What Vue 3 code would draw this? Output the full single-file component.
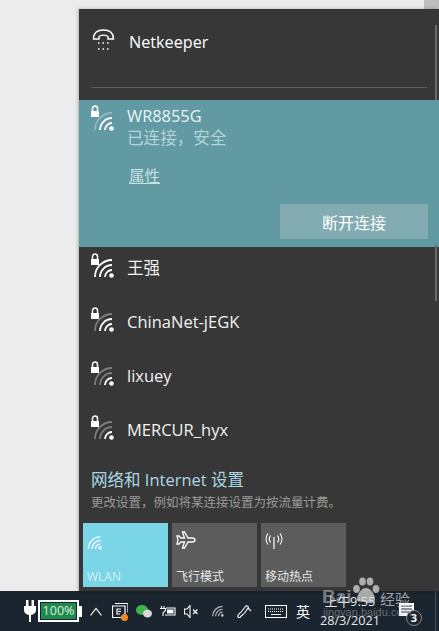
<script setup>
const networks = [
  { name: '王强', bars: 3 },
  { name: 'ChinaNet-jEGK', bars: 2 },
  { name: 'lixuey', bars: 1 },
  { name: 'MERCUR_hyx', bars: 1 }
]
</script>

<template>
  <div class="page">
    <div class="desk">
      <div class="corner"></div>
      <div class="flyout">
        <div class="dial">
          <svg class="dial-icon" width="24" height="22" viewBox="0 0 24 22" fill="none" stroke="#fff">
            <path d="M1.500 10C1.500 3.500 6 1 11.500 1s10 2.500 10 9h-5.500V7.500c-2.500-1.500-6.500-1.500-9 0V10z" stroke-width="1.400" />
            <path d="M6 14h1.500M10.500 14H12M15 14h1.500M6 20h1.500M10.500 20H12M15 20h1.500" stroke-width="1.500" />
          </svg>
          <span class="dial-name">Netkeeper</span>
        </div>
        <div class="divider"></div>

        <div class="active">
          <div class="active-top">
            <div class="wifi">
              <svg class="lock" width="10" height="13" viewBox="0 0 10 13">
                <path d="M2.500 6V3.500a2.500 2.500 0 0 1 5 0V6" fill="none" stroke="#fff" stroke-width="1.500" />
                <rect x="1" y="6" width="8" height="6" fill="#fff" />
              </svg>
              <svg class="bars" width="24" height="24" viewBox="0 0 24 24" fill="none" stroke="#fff" stroke-width="1.800">
                <path d="M12 21a7 7 0 0 1 7-7" />
                <path d="M7 21a12 12 0 0 1 12-12" />
                <path d="M2 21A17 17 0 0 1 19 4" opacity=".3" />
                <circle cx="18.500" cy="19.500" r="2.300" fill="#fff" stroke="none" />
              </svg>
            </div>
            <div class="active-text">
              <div class="active-name">WR8855G</div>
              <div class="active-state">已连接，安全</div>
            </div>
          </div>
          <a class="prop">属性</a>
          <div class="active-foot">
            <button class="disconnect">断开连接</button>
          </div>
        </div>

        <div v-for="net in networks" :key="net.name" class="net">
          <div class="wifi">
            <svg class="lock" width="10" height="13" viewBox="0 0 10 13">
              <path d="M2.500 6V3.500a2.500 2.500 0 0 1 5 0V6" fill="none" stroke="#fff" stroke-width="1.500" />
              <rect x="1" y="6" width="8" height="6" fill="#fff" />
            </svg>
            <svg class="bars" width="24" height="24" viewBox="0 0 24 24" fill="none" stroke="#fff" stroke-width="1.800">
              <path d="M12 21a7 7 0 0 1 7-7" :opacity="net.bars >= 1 ? 1 : .3" />
              <path d="M7 21a12 12 0 0 1 12-12" :opacity="net.bars >= 2 ? 1 : .35" />
              <path d="M2 21A17 17 0 0 1 19 4" :opacity="net.bars >= 3 ? 1 : .35" />
              <circle cx="18.500" cy="19.500" r="2.300" fill="#fff" stroke="none" />
            </svg>
          </div>
          <span class="net-name">{{ net.name }}</span>
        </div>

        <div class="settings">
          <div class="settings-title">网络和 Internet 设置</div>
          <div class="settings-sub">更改设置，例如将某连接设置为按流量计费。</div>
        </div>

        <div class="tiles">
          <div class="tile tile-on">
            <svg class="wlan-icon" width="17" height="17" viewBox="0 0 24 24" fill="none" stroke="#dff4f8" stroke-width="2.200">
              <path d="M12 21a7 7 0 0 1 7-7" />
              <path d="M7 21a12 12 0 0 1 12-12" />
              <path d="M2 21A17 17 0 0 1 19 4" />
              <circle cx="18.500" cy="19.500" r="2.600" fill="#dff4f8" stroke="none" />
            </svg>
            <span class="tile-label">WLAN</span>
          </div>
          <div class="tile">
            <svg width="20" height="20" viewBox="0 0 20 20" fill="none" stroke="#fff" stroke-width="1.300">
              <path d="M19 10c0-1.500-1.500-2-3-2h-4L8.500 2h-2l2 6H5L3 6H1l1 4-1 4h2l2-2h3.500l-2 6h2l3.500-6h4c1.500 0 3-.5 3-2z" />
            </svg>
            <span class="tile-label">飞行模式</span>
          </div>
          <div class="tile">
            <svg class="spot-icon" width="18" height="18" viewBox="0 0 18 18" fill="none" stroke="#fff" stroke-width="1.200">
              <path d="M9 5v12M5.500 3.500a6 6 0 0 0 0 7M12.500 3.500a6 6 0 0 1 0 7M3 1.500a9 9 0 0 0 0 11M15 1.500a9 9 0 0 1 0 11" />
            </svg>
            <span class="tile-label">移动热点</span>
          </div>
        </div>

        <div class="thumb thumb-top"></div>
        <div class="thumb thumb-low"></div>
      </div>
    </div>

    <div class="taskbar">
      <svg class="plug" width="12" height="22" viewBox="0 0 12 22" fill="#fff">
        <rect x="2" y="0" width="2.500" height="6" />
        <rect x="7.500" y="0" width="2.500" height="6" />
        <path d="M0 6h12v4a5 5 0 0 1-5 5v7H5v-7a5 5 0 0 1-5-5z" />
      </svg>
      <div class="battery">
        <div class="battery-fill">100%</div>
      </div>
      <div class="battery-tip"></div>
      <svg class="chev" width="12" height="9" viewBox="0 0 12 9" fill="none" stroke="#fff" stroke-width="1.200">
        <path d="M.5 8.500L6 1.500l5.500 7" />
      </svg>
      <div class="screen">
        <svg width="16" height="16" viewBox="0 0 16 16" fill="none" stroke="#fff" stroke-width="1.200">
          <path d="M.5 3h12.500v11.500H.5zM3 .5h13v9" />
          <path d="M9 6H5v5h3M6 8.500h3" />
        </svg>
        <span class="dot"></span>
      </div>
      <svg class="wechat" width="16" height="13" viewBox="0 0 16 13">
        <ellipse cx="6" cy="5" rx="6" ry="5" fill="#3cb54a" />
        <ellipse cx="11.500" cy="8.500" rx="4.500" ry="4" fill="#d8d8d8" />
      </svg>
      <svg class="power" width="16" height="11" viewBox="0 0 16 11" fill="none" stroke="#fff" stroke-width="1.100">
        <path d="M1.500 0v2.500M4 0v2.500M0 2.500h5.500v2L3 7v3" />
        <path d="M6 2h9v7H5" />
        <rect x="7" y="3.500" width="6.500" height="4" fill="#fff" stroke="none" />
      </svg>
      <svg class="speaker" width="14" height="13" viewBox="0 0 14 13" fill="none" stroke="#fff" stroke-width="1.100">
        <path d="M.5 4h2.500l3-3.500v12L3 9H.5zM9 4.500l4.500 4.500M13.500 4.500L9 9" />
      </svg>
      <svg class="tray-wifi" width="15" height="14" viewBox="0 0 24 24" fill="none" stroke="#bbb" stroke-width="2">
        <path d="M12 21a7 7 0 0 1 7-7" />
        <path d="M7 21a12 12 0 0 1 12-12" />
        <path d="M2 21A17 17 0 0 1 19 4" />
        <circle cx="18.500" cy="19.500" r="2.300" fill="#bbb" stroke="none" />
      </svg>
      <svg class="pen" width="16" height="13" viewBox="0 0 16 13" fill="none" stroke="#fff" stroke-width="1.100">
        <path d="M2 12C.5 10 4 8.500 6 6l3.500-4.500c1.500-1.500 3.500 0 2.500 1.500L9 7.500c-2 2.500-4 3-5 5-.5.500-1.500.500-2-.5z" />
        <path d="M12 3l3 3" />
      </svg>
      <svg class="keyboard" width="22" height="13" viewBox="0 0 22 13" fill="none" stroke="#fff" stroke-width="1">
        <rect x=".5" y=".5" width="21" height="12" />
        <path d="M3 4h16M3 6.500h16" stroke-dasharray="1 1" />
        <path d="M6 9.500h10" />
      </svg>
      <span class="ime">英</span>
      <div class="clock">
        <span>上午9:55</span>
        <span>28/3/2021</span>
      </div>
      <div class="notice">
        <svg width="15" height="13" viewBox="0 0 15 13">
          <path d="M0 0h15v13H0z" fill="#fff" />
          <path d="M2 3h11M2 6h11M2 9h8" stroke="#1b2530" />
        </svg>
        <span class="badge">3</span>
      </div>
      <div class="desktop-edge"></div>
    </div>

    <svg class="paw" width="28" height="28" viewBox="0 0 28 28" fill="#d8d8d8">
      <ellipse cx="4.500" cy="12" rx="3.300" ry="4" />
      <ellipse cx="10.500" cy="4.500" rx="3.300" ry="4" />
      <ellipse cx="18" cy="4.500" rx="3.300" ry="4" />
      <ellipse cx="24" cy="12" rx="3.300" ry="4" />
      <path d="M14 11c5 0 9 7 9 11s-4 5-9 3.500S5 26 5 22s4-11 9-11z" />
    </svg>
    <span class="wm-bai">Bai</span>
    <span class="wm-jy">经验</span>
    <span class="wm-url">jingyan.baidu.com</span>
  </div>
</template>

<style scoped>
.page {
  position: relative;
  width: 439px;
  height: 631px;
  display: flex;
  flex-direction: column;
  overflow: hidden;
  font-family: "Open Sans", "Noto Sans CJK SC", sans-serif;
  background: #ececec;
}
.desk {
  position: relative;
  flex: 1;
  min-height: 0;
  padding: 9px 0 0 79px;
  box-sizing: border-box;
}
.corner {
  position: absolute;
  right: 0;
  top: 0;
  width: 15px;
  height: 9px;
  background: #bdbdbd;
}
.flyout {
  position: relative;
  height: 582px;
  background: #373737;
  box-shadow: -1px 0 3px rgba(0, 0, 0, 0.25);
  display: flex;
  flex-direction: column;
  overflow: hidden;
}
.dial {
  height: 68px;
  display: flex;
  align-items: center;
  padding-left: 13px;
  gap: 13px;
  box-sizing: border-box;
  padding-bottom: 2px;
}
.dial-icon {
  margin-bottom: 4px;
}
.dial-name {
  color: #fff;
  font-size: 16.200px;
}
.divider {
  height: 1px;
  background: #5e5e5e;
  margin: 10px 12px 12px;
}
.active {
  height: 147px;
  background: #629aa3;
  flex: none;
  position: relative;
}
.active-top {
  display: flex;
  padding-top: 5px;
  gap: 8px;
}
.wifi {
  position: relative;
  width: 40px;
  height: 32px;
  flex: none;
}
.lock {
  position: absolute;
  left: 11px;
  top: 0;
}
.bars {
  position: absolute;
  left: 14px;
  top: 4px;
}
.active-name {
  color: #eaf4f5;
  font-size: 16.400px;
  line-height: 20px;
  margin-top: 1px;
}
.active-state {
  color: #b3d4d8;
  font-size: 16.600px;
  line-height: 24px;
}
.prop {
  display: block;
  margin: 16px 0 0 50px;
  color: #c6e1e4;
  font-size: 15.500px;
  line-height: 20px;
  text-decoration: underline;
}
.active-foot {
  display: flex;
  justify-content: flex-end;
  padding: 18px 11px 0 0;
}
.disconnect {
  width: 148px;
  height: 35px;
  border: 0;
  background: #82acb2;
  color: #fff;
  font-family: inherit;
  font-size: 16px;
}
.net {
  height: 54px;
  flex: none;
  display: flex;
  align-items: flex-start;
  gap: 8px;
  padding-top: 6px;
  box-sizing: border-box;
}
.net .bars {
  top: 3px;
}
.net-name {
  color: #f2f2f2;
  font-size: 16.500px;
  line-height: 30px;
}
.settings {
  padding: 0 0 0 12px;
  margin-top: 6px;
}
.settings-title {
  color: #a9d8e2;
  font-size: 16.500px;
  line-height: 22px;
}
.settings-sub {
  color: #9a9a9a;
  font-size: 12.500px;
  line-height: 20px;
  margin-top: 2px;
}
.tiles {
  display: flex;
  gap: 4px;
  padding: 10px 0 0 4px;
}
.tile {
  width: 85px;
  height: 64px;
  padding: 7px 0 0 4px;
  background: #5c5c5c;
  box-sizing: border-box;
  position: relative;
}
.tile-on {
  background: #7ad5e6;
}
.tile svg {
  display: block;
}
.tile .wlan-icon {
  margin-top: 4px;
}
.tile .spot-icon {
  margin-top: 2px;
}
.tile-label {
  position: absolute;
  left: 4px;
  bottom: 2px;
  color: #e6e6e6;
  font-size: 12px;
}
.tile-on .tile-label {
  color: #d5f1f6;
}
.thumb {
  position: absolute;
  right: 2px;
  width: 2px;
  background: #6a6a6a;
}
.thumb-top {
  top: 16px;
  height: 75px;
}
.thumb-low {
  top: 236px;
  height: 56px;
}
.taskbar {
  height: 40px;
  flex: none;
  background: #1b2530;
  display: flex;
  align-items: center;
  padding-left: 24px;
}
.taskbar svg {
  flex: none;
}
.battery {
  margin-left: 2px;
  width: 41px;
  height: 22px;
  box-sizing: border-box;
  border: 2px solid #fff;
  padding: 1px;
}
.battery-fill {
  height: 100%;
  background: #1f8a4c;
  color: #d9efe0;
  font-size: 12.500px;
  line-height: 16px;
  text-align: center;
}
.battery-tip {
  width: 3px;
  height: 11px;
  background: #fff;
}
.chev {
  margin-left: 8px;
}
.screen {
  position: relative;
  width: 16px;
  height: 16px;
  margin-left: 10px;
}
.screen svg {
  display: block;
}
.dot {
  position: absolute;
  right: 0;
  bottom: -2px;
  width: 7px;
  height: 7px;
  border-radius: 50%;
  background: #f08a1d;
}
.wechat {
  margin-left: 8px;
}
.power {
  margin-left: 8px;
}
.speaker {
  margin-left: 8px;
}
.tray-wifi {
  margin-left: 13px;
}
.pen {
  margin-left: 10px;
}
.keyboard {
  margin-left: 13px;
}
.ime {
  margin-left: 9px;
  color: #fff;
  font-size: 14px;
}
.clock {
  width: 60px;
  margin-left: 10px;
  display: flex;
  flex-direction: column;
  align-items: center;
  color: #e9e9e9;
  font-size: 12.700px;
  line-height: 19.500px;
  white-space: nowrap;
}
.notice {
  position: relative;
  margin-left: 19px;
  width: 22px;
  height: 16px;
}
.notice svg {
  display: block;
}
.badge {
  position: absolute;
  left: 7px;
  top: 7px;
  width: 16px;
  height: 16px;
  box-sizing: border-box;
  border-radius: 50%;
  border: 1px solid #888;
  background: #1b2530;
  color: #fff;
  font-size: 11px;
  line-height: 14px;
  text-align: center;
  font-weight: 700;
}
.desktop-edge {
  align-self: stretch;
  width: 1px;
  margin-left: 14px;
  background: #46505a;
}
.paw {
  position: absolute;
  left: 352px;
  top: 577px;
  opacity: 0.75;
}
.wm-bai,
.wm-jy,
.wm-url {
  position: absolute;
  font-family: "Liberation Sans", "Noto Sans CJK SC", sans-serif;
}
.wm-bai {
  left: 322px;
  top: 586px;
  color: rgba(200, 200, 200, 0.55);
  font-size: 19px;
  font-weight: 700;
}
.wm-jy {
  left: 380px;
  top: 588px;
  color: rgba(220, 220, 220, 0.7);
  font-size: 15px;
}
.wm-url {
  left: 323px;
  top: 606px;
  color: rgba(180, 180, 180, 0.5);
  font-size: 11px;
}
</style>
